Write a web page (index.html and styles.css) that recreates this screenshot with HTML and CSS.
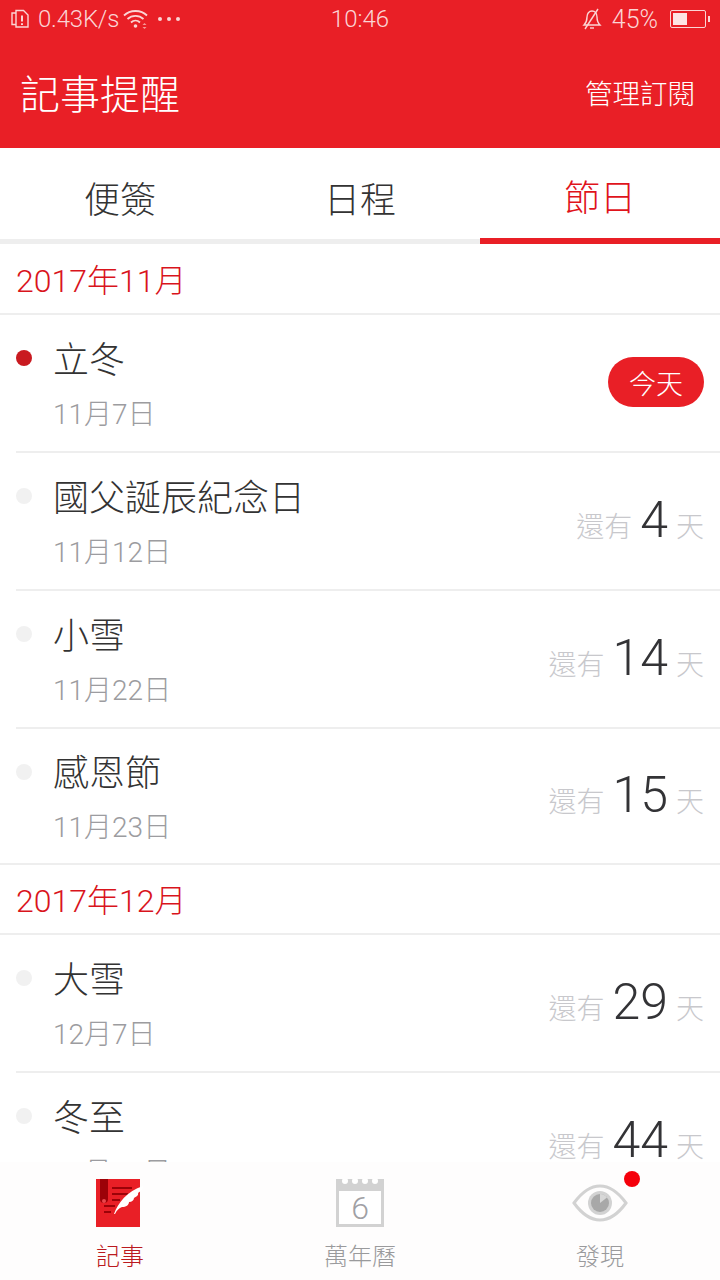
FILE: index.html
```html
<!DOCTYPE html>
<html lang="zh-Hant">
<head>
  <meta charset="UTF-8">
  <title>記事提醒</title>
  <link rel="stylesheet" href="styles.css">
</head>
<body>
  <div class="page">
    <header class="top">
      <div class="status">
        <div class="status-left">
          <svg class="ic-sim" width="20" height="20" viewBox="0 0 20 20" fill="none" stroke="#fbd5d5" stroke-width="1.4">
            <path d="M6 4V1.5h7.5L18 6v12H6z"/>
            <path d="M6 4H2v11.5h4"/>
            <path d="M12 6.5v6M12 14.2v1.8" stroke-width="2"/>
          </svg>
          <span class="speed">0.43K/s</span>
          <svg class="ic-wifi" width="26" height="22" viewBox="0 0 26 22" fill="none" stroke="#fbd5d5" stroke-width="1.8">
            <path d="M1 7.5C7 1.5 18 1.5 24 7.5"/>
            <path d="M4.5 11C9 6.8 16 6.8 20.5 11"/>
            <path d="M8 14.5c2.6-2.4 6.4-2.4 9 0"/>
            <circle cx="12.5" cy="18" r="1.8" fill="#fbd5d5" stroke="none"/>
            <path d="M21.5 15l2 2h-4zM21.5 21l2-2h-4z" fill="#f59a9a" stroke="none"/>
          </svg>
          <span class="dots"><i></i><i></i><i></i></span>
        </div>
        <div class="clock">10:46</div>
        <div class="status-right">
          <svg width="20" height="22" viewBox="0 0 20 22" fill="none" stroke="#fbd5d5" stroke-width="1.4">
            <path d="M2 17c2-2 3-4 3-8 0-3.500 2-6 5-6s5 2.500 5 6c0 4 1 6 3 8z"/>
            <path d="M8 20h4"/>
            <path d="M16 1L3 21"/>
          </svg>
          <span class="pct">45%</span>
          <span class="battery"><span class="battery-fill" style="width: 45%"></span></span>
        </div>
      </div>
      <div class="titlebar">
        <h1>記事提醒</h1>
        <a class="manage">管理訂閱</a>
      </div>
    </header>

    <nav class="tabs">
      <div class="tab">便簽</div>
      <div class="tab">日程</div>
      <div class="tab active">節日</div>
    </nav>

    <main class="list">
      <div class="month">2017年11月</div>
      <div class="row today">
        <span class="dot red"></span>
        <div class="info"><div class="name">立冬</div><div class="date">11月7日</div></div>
        <span class="badge">今天</span>
      </div>
      <div class="row">
        <span class="dot"></span>
        <div class="info"><div class="name">國父誕辰紀念日</div><div class="date">11月12日</div></div>
        <div class="left"><span>還有</span><b>4</b><span>天</span></div>
      </div>
      <div class="row">
        <span class="dot"></span>
        <div class="info"><div class="name">小雪</div><div class="date">11月22日</div></div>
        <div class="left"><span>還有</span><b>14</b><span>天</span></div>
      </div>
      <div class="row last">
        <span class="dot"></span>
        <div class="info"><div class="name">感恩節</div><div class="date">11月23日</div></div>
        <div class="left"><span>還有</span><b>15</b><span>天</span></div>
      </div>
      <div class="month">2017年12月</div>
      <div class="row">
        <span class="dot"></span>
        <div class="info"><div class="name">大雪</div><div class="date">12月7日</div></div>
        <div class="left"><span>還有</span><b>29</b><span>天</span></div>
      </div>
      <div class="row">
        <span class="dot"></span>
        <div class="info"><div class="name">冬至</div><div class="date">12月22日</div></div>
        <div class="left"><span>還有</span><b>44</b><span>天</span></div>
      </div>
    </main>

    <footer class="bottom">
      <div class="item on">
        <svg class="ic-book" width="44" height="48" viewBox="0 0 44 48">
          <rect width="44" height="48" fill="#e91f26"/>
          <path d="M4 0h8v20a4 4 0 0 1-8 0z" fill="#9c0208"/>
          <circle cx="8" cy="22" r="2" fill="#e8474c"/>
          <path d="M16 9h20M16 15h16M16 21h8M8 27h11M8 33h7" stroke="#9c0208" stroke-width="2" fill="none"/>
          <path d="M18 35C22 24 31 12 47 7c0 3-2 5-5 7 1 2-2 4-4 5 0 2-2 4-5 4 0 3-3 5-7 5-3 1-5 3-7 7z" fill="#fff"/>
        </svg>
        <span>記事</span>
      </div>
      <div class="item">
        <svg width="48" height="48" viewBox="0 0 48 48">
          <path d="M0 0h48v48H0z" fill="#d2d2d2"/>
          <rect x="3" y="12" width="42" height="33" fill="#fff"/>
          <circle cx="9" cy="2" r="3" fill="#fff"/><circle cx="19" cy="2" r="3" fill="#fff"/>
          <circle cx="29" cy="2" r="3" fill="#fff"/><circle cx="39" cy="2" r="3" fill="#fff"/>
          <text class="cal-num" x="24" y="40" text-anchor="middle">6</text>
        </svg>
        <span>萬年曆</span>
      </div>
      <div class="item">
        <div class="eye-wrap">
          <svg width="56" height="40" viewBox="0 0 56 40">
            <path d="M2 20C10 9 18 3 28 3s18 6 26 17c-8 11-16 17-26 17S10 31 2 20z" fill="none" stroke="#d2d2d2" stroke-width="3"/>
            <circle cx="28" cy="20" r="12" fill="#d2d2d2"/>
            <circle cx="28" cy="20" r="9" fill="#a8a8a8"/>
            <path d="M28 20v-9a9 9 0 0 1 7 3.500z" fill="#d8d8d8"/>
          </svg>
          <i class="notify"></i>
        </div>
        <span>發現</span>
      </div>
    </footer>
  </div>
</body>
</html>
```

FILE: styles.css
```css
* {
  box-sizing: border-box;
}

body {
  margin: 0;
  background-color: #fff;
  font-family: "Roboto", "Noto Sans CJK TC", sans-serif;
  font-weight: 300;
}

.page {
  width: 720px;
  height: 1280px;
  display: flex;
  flex-direction: column;
  overflow: hidden;
}

.top {
  height: 148px;
  flex: none;
  background-color: #e91f26;
  color: #fff;
}

.status {
  height: 38px;
  padding: 0 14px 0 10px;
  display: grid;
  grid-template-columns: 1fr auto 1fr;
  align-items: center;
  color: #fbd5d5;
  font-size: 24px;
}

.status-left,
.status-right {
  display: flex;
  align-items: center;
}

.status-right {
  justify-content: flex-end;
}

.clock {
  margin-left: 4px;
}

.speed {
  margin: 0 4px 0 8px;
  letter-spacing: -0.2px;
}

.dots {
  display: flex;
  gap: 5px;
  margin-left: 9px;
}

.dots i {
  width: 4px;
  height: 4px;
  border-radius: 50%;
  background-color: #fbd5d5;
}

.pct {
  margin: 0 12px 0 10px;
  font-size: 25px;
}

.battery {
  width: 36px;
  height: 18px;
  padding: 2px;
  border: 1px solid #fbd5d5;
  border-radius: 2px;
  display: block;
  position: relative;
}

.battery:after {
  content: "";
  position: absolute;
  right: -5px;
  top: 5px;
  width: 2px;
  height: 6px;
  background-color: #fbd5d5;
}

.battery-fill {
  display: block;
  height: 100%;
  background-color: #fde4e4;
}

.titlebar {
  height: 110px;
  padding: 0 25px 0 20px;
  display: flex;
  align-items: center;
  justify-content: space-between;
}

.titlebar h1 {
  margin: 0 0 2px;
  font-size: 40px;
  font-weight: 300;
}

.manage {
  font-size: 27.5px;
  margin-bottom: 2px;
}

.tabs {
  height: 96px;
  flex: none;
  display: flex;
  border-bottom: 5px solid #eeeeee;
}

.tab {
  flex: 1;
  margin-bottom: -5px;
  padding-top: 2px;
  display: flex;
  align-items: center;
  justify-content: center;
  font-size: 36px;
  color: #333;
}

.tab.active {
  color: #e0141c;
  border-bottom: 6px solid #e91f26;
  padding-top: 4px;
}

.list {
  flex: 1;
  min-height: 0;
  overflow: hidden;
}

.month {
  height: 70px;
  padding: 0 16px 2px;
  display: flex;
  align-items: center;
  border-bottom: 2px solid #eeeeee;
  font-size: 32px;
  color: #d9141c;
}

.month:first-child {
  height: 71px;
}

.row {
  height: 138px;
  margin-left: 16px;
  padding: 0 16px 0 0;
  display: flex;
  align-items: center;
  border-bottom: 2px solid #eeeeee;
}

.row.last {
  height: 136px;
  margin-left: 0;
  padding-left: 16px;
}

.dot {
  width: 16px;
  height: 16px;
  flex: none;
  align-self: flex-start;
  margin-top: 35px;
  border-radius: 50%;
  background-color: #f1f1f1;
}

.dot.red {
  background-color: #c91a20;
}

.info {
  flex: 1;
  margin-left: 21px;
  padding-top: 4px;
}

.name {
  font-size: 36px;
  line-height: 48px;
  color: #333;
}

.date {
  margin-top: 12px;
  font-size: 28px;
  line-height: 36px;
  color: #9c9ca0;
}

.badge {
  width: 96px;
  height: 50px;
  margin-bottom: 2px;
  display: flex;
  align-items: center;
  justify-content: center;
  border-radius: 25px;
  background-color: #e91f26;
  color: #fff;
  font-size: 27px;
}

.left {
  display: flex;
  align-items: baseline;
  gap: 8px;
  margin-bottom: 2px;
  font-size: 28px;
  color: #c8c8cc;
}

.left b {
  font-size: 50px;
  font-weight: 300;
  color: #333336;
}

.bottom {
  height: 118px;
  flex: none;
  display: flex;
  background-color: #fefdfd;
}

.item {
  flex: 1;
  padding-top: 17px;
  display: flex;
  flex-direction: column;
  align-items: center;
  font-size: 24px;
  color: #9a9a9c;
}

.item svg {
  display: block;
}

.ic-book {
  margin-right: 4px;
  overflow: visible;
}

.item span {
  margin-top: 10px;
}

.item.on {
  color: #bb1a20;
}

.cal-num {
  font-size: 32px;
  fill: #a0a0a4;
}

.eye-wrap {
  height: 48px;
  display: flex;
  align-items: center;
  position: relative;
}

.notify {
  position: absolute;
  right: -12px;
  top: -8px;
  width: 16px;
  height: 16px;
  border-radius: 50%;
  background-color: #f5000b;
}
```
